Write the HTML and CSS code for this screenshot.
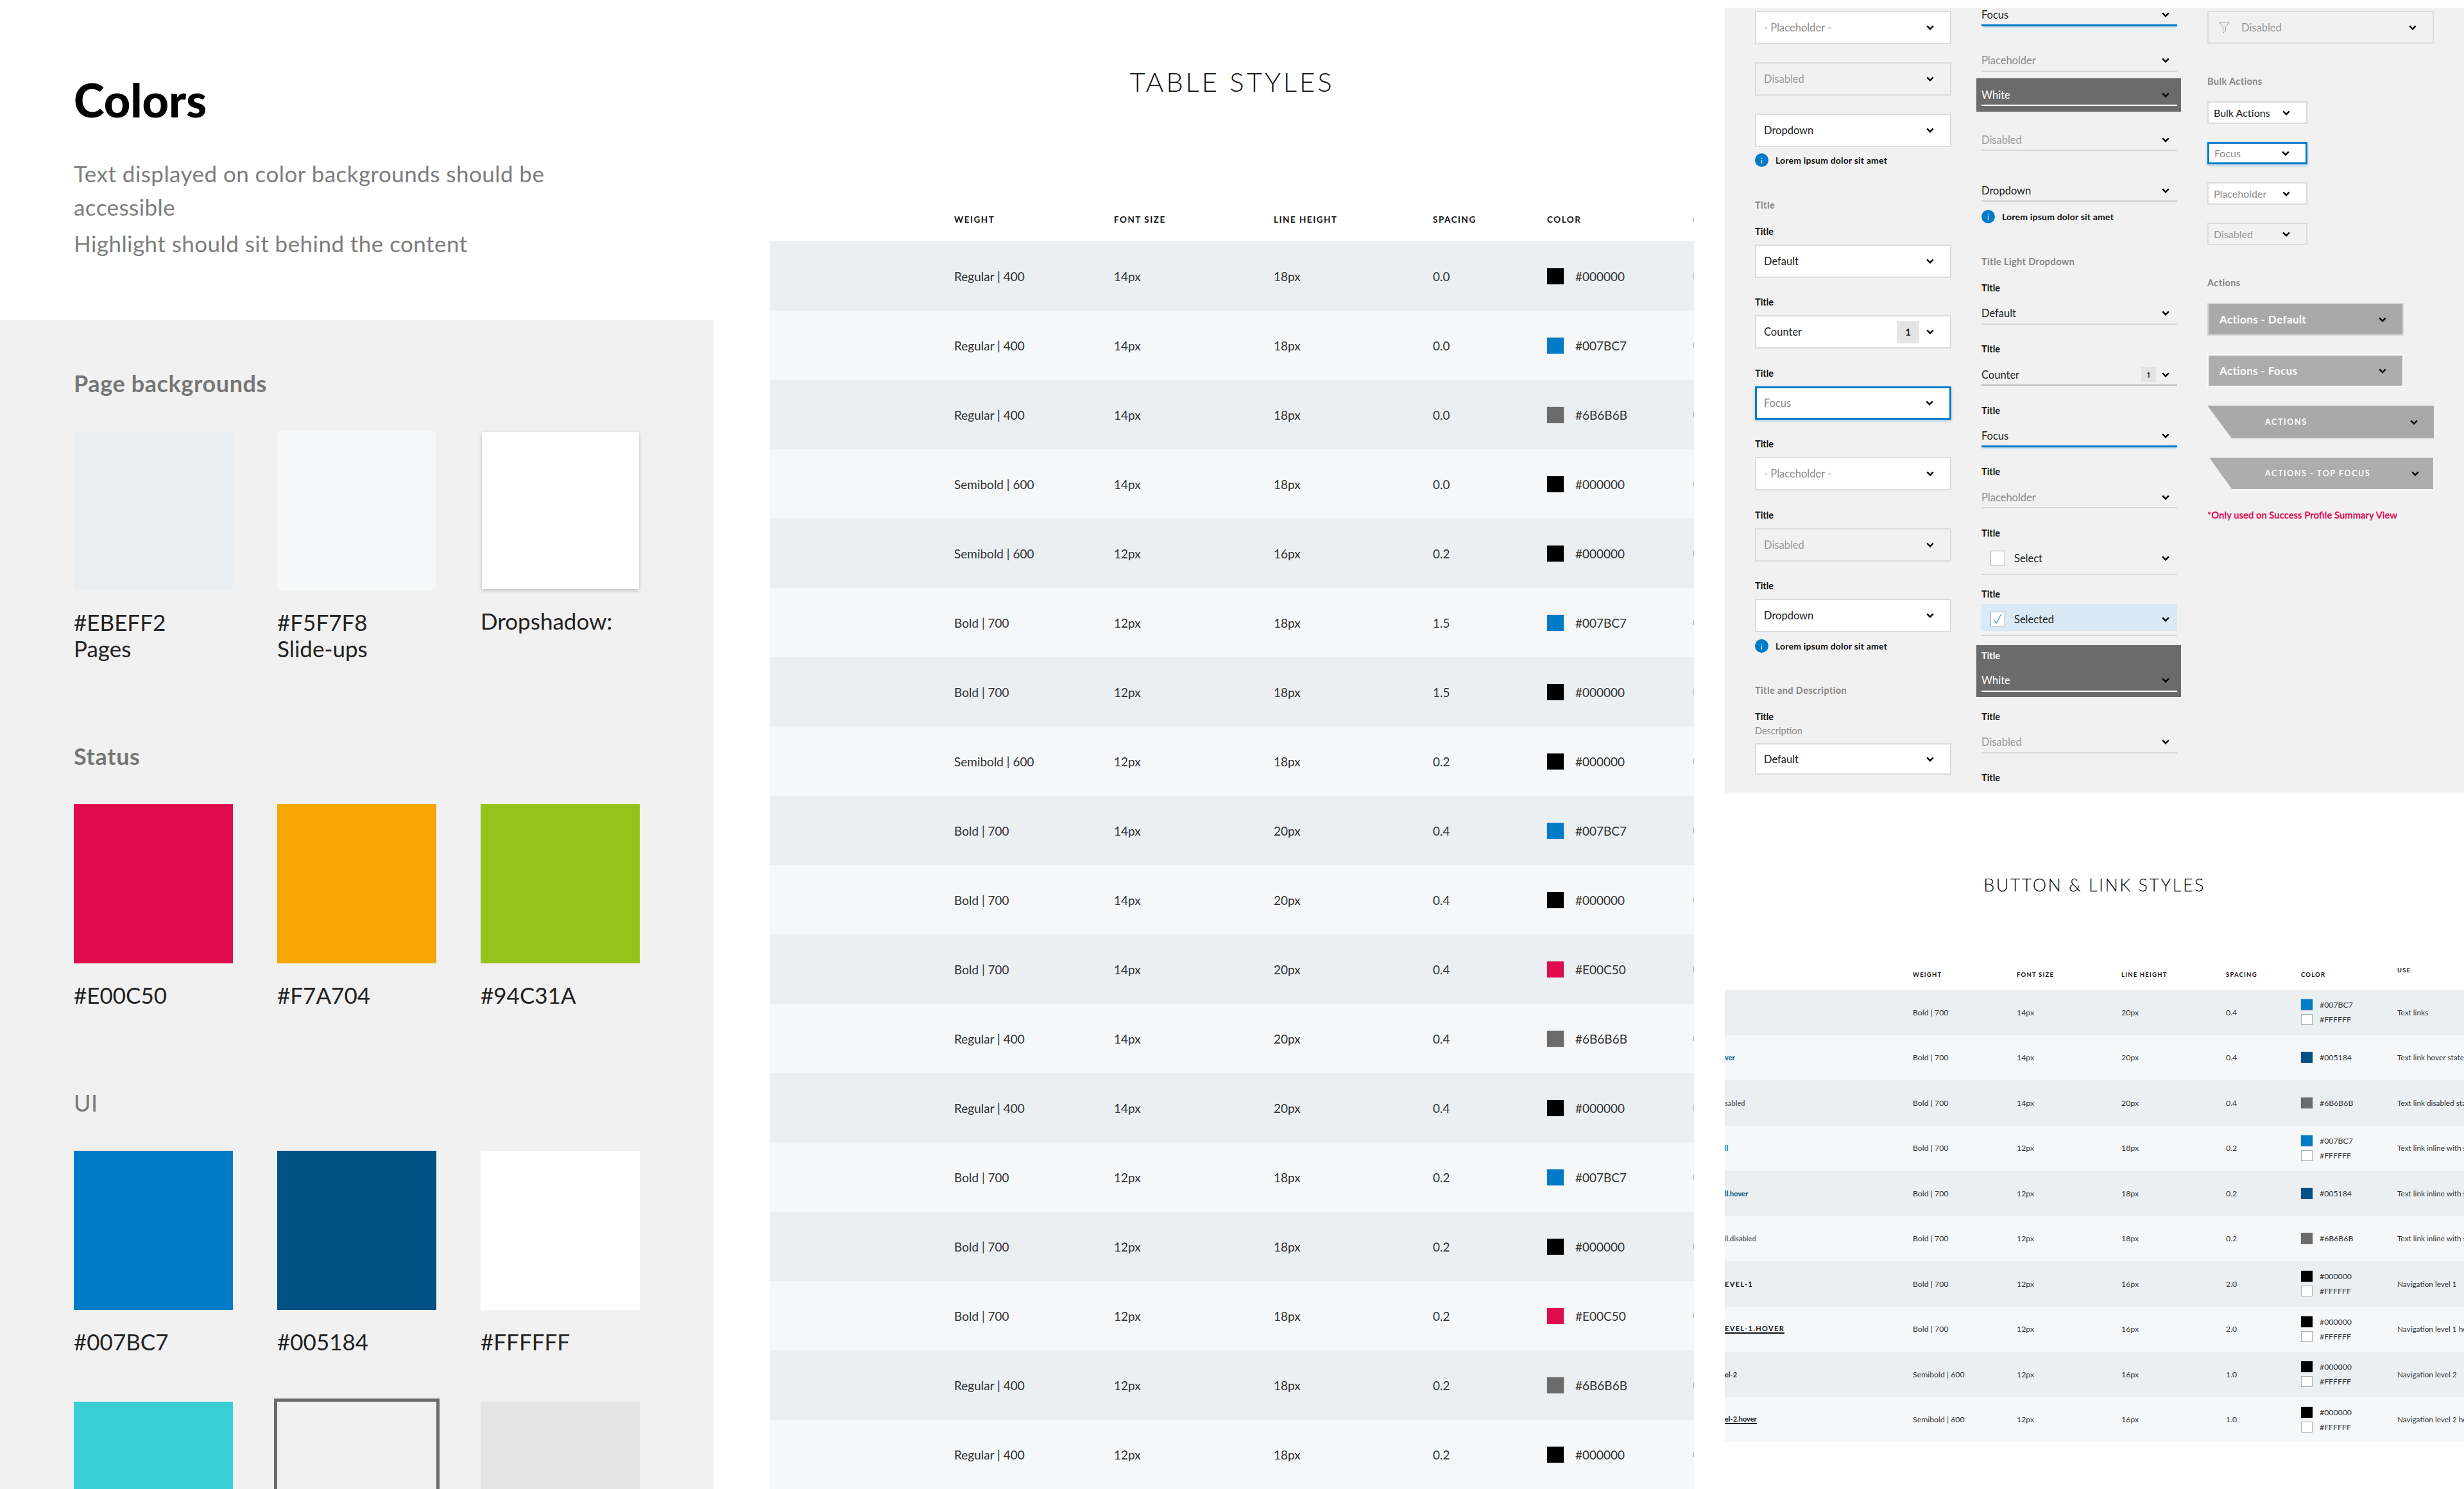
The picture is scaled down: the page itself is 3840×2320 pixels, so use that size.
FILE: index.html
```html
<!DOCTYPE html>
<html lang="en">
<head>
  <meta charset="UTF-8" />
  <title>Style guide</title>
  <link rel="stylesheet" href="styles.css">
</head>
<body>
<svg class="defs">
  <symbol id="chev" viewBox="0 0 12 8"><path d="M1.2 1.4 6 6.2l4.8-4.8" fill="none" stroke="#000" stroke-width="2.4"/></symbol>
</svg>

<div class="page">

  <!-- colors -->
  <section class="colors">
    <div class="intro">
      <h1>Colors</h1>
      <p class="lead">Text displayed on color backgrounds should be accessible</p>
      <p class="lead lead-2">Highlight should sit behind the content</p>
    </div>
    <div class="palette">
      <h2>Page backgrounds</h2>
      <div class="swatches">
        <div class="swatch-item"><div class="swatch pages"></div><p>#EBEFF2<br>Pages</p></div>
        <div class="swatch-item"><div class="swatch slides"></div><p>#F5F7F8<br>Slide-ups</p></div>
        <div class="swatch-item"><div class="swatch shadow"></div><p>Dropshadow:</p></div>
      </div>
      <h2 class="status-head">Status</h2>
      <div class="swatches">
        <div class="swatch-item"><div class="swatch red"></div><p>#E00C50</p></div>
        <div class="swatch-item"><div class="swatch orange"></div><p>#F7A704</p></div>
        <div class="swatch-item"><div class="swatch green"></div><p>#94C31A</p></div>
      </div>
      <h2 class="ui-head">UI</h2>
      <div class="swatches">
        <div class="swatch-item"><div class="swatch blue"></div><p>#007BC7</p></div>
        <div class="swatch-item"><div class="swatch navy"></div><p>#005184</p></div>
        <div class="swatch-item"><div class="swatch white"></div><p>#FFFFFF</p></div>
      </div>
      <div class="swatches last-row">
        <div class="swatch-item"><div class="swatch cyan"></div></div>
        <div class="swatch-item"><div class="swatch outlined"></div></div>
        <div class="swatch-item"><div class="swatch light"></div></div>
      </div>
    </div>
  </section>

  <!-- table styles -->
  <section class="table-styles">
    <div class="big-title">TABLE STYLES</div>
    <div class="t1-row t1-head"><div>WEIGHT</div><div>FONT SIZE</div><div>LINE HEIGHT</div><div>SPACING</div><div>COLOR</div><div class="sliver"></div></div>
    <div class="t1-row"><div>Regular | 400</div><div>14px</div><div>18px</div><div>0.0</div><div class="chip"><i class="c-black"></i>#000000</div><div class="sliver"></div></div>
    <div class="t1-row"><div>Regular | 400</div><div>14px</div><div>18px</div><div>0.0</div><div class="chip"><i class="c-blue"></i>#007BC7</div><div class="sliver"></div></div>
    <div class="t1-row"><div>Regular | 400</div><div>14px</div><div>18px</div><div>0.0</div><div class="chip"><i class="c-grey"></i>#6B6B6B</div><div class="sliver"></div></div>
    <div class="t1-row"><div>Semibold | 600</div><div>14px</div><div>18px</div><div>0.0</div><div class="chip"><i class="c-black"></i>#000000</div><div class="sliver"></div></div>
    <div class="t1-row"><div>Semibold | 600</div><div>12px</div><div>16px</div><div>0.2</div><div class="chip"><i class="c-black"></i>#000000</div><div class="sliver"></div></div>
    <div class="t1-row"><div>Bold | 700</div><div>12px</div><div>18px</div><div>1.5</div><div class="chip"><i class="c-blue"></i>#007BC7</div><div class="sliver"></div></div>
    <div class="t1-row"><div>Bold | 700</div><div>12px</div><div>18px</div><div>1.5</div><div class="chip"><i class="c-black"></i>#000000</div><div class="sliver"></div></div>
    <div class="t1-row"><div>Semibold | 600</div><div>12px</div><div>18px</div><div>0.2</div><div class="chip"><i class="c-black"></i>#000000</div><div class="sliver"></div></div>
    <div class="t1-row"><div>Bold | 700</div><div>14px</div><div>20px</div><div>0.4</div><div class="chip"><i class="c-blue"></i>#007BC7</div><div class="sliver"></div></div>
    <div class="t1-row"><div>Bold | 700</div><div>14px</div><div>20px</div><div>0.4</div><div class="chip"><i class="c-black"></i>#000000</div><div class="sliver"></div></div>
    <div class="t1-row"><div>Bold | 700</div><div>14px</div><div>20px</div><div>0.4</div><div class="chip"><i class="c-red"></i>#E00C50</div><div class="sliver"></div></div>
    <div class="t1-row"><div>Regular | 400</div><div>14px</div><div>20px</div><div>0.4</div><div class="chip"><i class="c-grey"></i>#6B6B6B</div><div class="sliver"></div></div>
    <div class="t1-row"><div>Regular | 400</div><div>14px</div><div>20px</div><div>0.4</div><div class="chip"><i class="c-black"></i>#000000</div><div class="sliver"></div></div>
    <div class="t1-row"><div>Bold | 700</div><div>12px</div><div>18px</div><div>0.2</div><div class="chip"><i class="c-blue"></i>#007BC7</div><div class="sliver"></div></div>
    <div class="t1-row"><div>Bold | 700</div><div>12px</div><div>18px</div><div>0.2</div><div class="chip"><i class="c-black"></i>#000000</div><div class="sliver"></div></div>
    <div class="t1-row"><div>Bold | 700</div><div>12px</div><div>18px</div><div>0.2</div><div class="chip"><i class="c-red"></i>#E00C50</div><div class="sliver"></div></div>
    <div class="t1-row"><div>Regular | 400</div><div>12px</div><div>18px</div><div>0.2</div><div class="chip"><i class="c-grey"></i>#6B6B6B</div><div class="sliver"></div></div>
    <div class="t1-row"><div>Regular | 400</div><div>12px</div><div>18px</div><div>0.2</div><div class="chip"><i class="c-black"></i>#000000</div><div class="sliver"></div></div>
  </section>

  <section class="right">
    <!-- dropdowns -->
    <div class="dropdowns">
      <div class="col col-1">
        <div class="box placeholder"><span>- Placeholder -</span><svg class="chev"><use href="#chev"/></svg></div>
        <div class="box disabled"><span>Disabled</span><svg class="chev"><use href="#chev"/></svg></div>
        <div class="box"><span>Dropdown</span><svg class="chev"><use href="#chev"/></svg></div>
        <div class="info"><b>i</b>Lorem ipsum dolor sit amet</div>

        <div class="section-label">Title</div>
        <div class="field"><label>Title</label><div class="box"><span>Default</span><svg class="chev"><use href="#chev"/></svg></div></div>
        <div class="field"><label>Title</label><div class="box"><span>Counter</span><em class="count">1</em><svg class="chev"><use href="#chev"/></svg></div></div>
        <div class="field"><label>Title</label><div class="box focus placeholder"><span>Focus</span><svg class="chev"><use href="#chev"/></svg></div></div>
        <div class="field"><label>Title</label><div class="box placeholder"><span>- Placeholder -</span><svg class="chev"><use href="#chev"/></svg></div></div>
        <div class="field"><label>Title</label><div class="box disabled"><span>Disabled</span><svg class="chev"><use href="#chev"/></svg></div></div>
        <div class="field"><label>Title</label><div class="box"><span>Dropdown</span><svg class="chev"><use href="#chev"/></svg></div></div>
        <div class="info"><b>i</b>Lorem ipsum dolor sit amet</div>

        <div class="section-label">Title and Description</div>
        <div class="field"><label class="tight">Title</label><div class="desc">Description</div><div class="box short"><span>Default</span><svg class="chev"><use href="#chev"/></svg></div></div>
      </div>

      <div class="col col-2">
        <div class="line focus-line first"><span>Focus</span><svg class="chev"><use href="#chev"/></svg></div>
        <div class="line placeholder"><span>Placeholder</span><svg class="chev"><use href="#chev"/></svg></div>
        <div class="dark top-dark"><div class="line white-line"><span>White</span><svg class="chev"><use href="#chev"/></svg></div></div>
        <div class="line disabled after-dark"><span>Disabled</span><svg class="chev"><use href="#chev"/></svg></div>
        <div class="line thick"><span>Dropdown</span><svg class="chev"><use href="#chev"/></svg></div>
        <div class="info"><b>i</b>Lorem ipsum dolor sit amet</div>

        <div class="section-label">Title Light Dropdown</div>
        <div class="field"><label>Title</label><div class="line"><span>Default</span><svg class="chev"><use href="#chev"/></svg></div></div>
        <div class="field"><label>Title</label><div class="line darker"><span>Counter</span><em class="count small">1</em><svg class="chev"><use href="#chev"/></svg></div></div>
        <div class="field"><label>Title</label><div class="line focus-line"><span>Focus</span><svg class="chev"><use href="#chev"/></svg></div></div>
        <div class="field"><label>Title</label><div class="line placeholder"><span>Placeholder</span><svg class="chev"><use href="#chev"/></svg></div></div>
        <div class="field check-field"><label>Title</label><div class="check-wrap"><div class="check-row"><i class="tick"></i><span>Select</span><svg class="chev"><use href="#chev"/></svg></div></div></div>
        <div class="field check-field"><label>Title</label><div class="check-wrap"><div class="check-row selected"><i class="tick"><svg viewBox="0 0 23 23"><path d="M5 13.5 9 18.5 17 3.5" fill="none" stroke="#1f8fd8" stroke-width="1.2"/></svg></i><span>Selected</span><svg class="chev"><use href="#chev"/></svg></div></div></div>
        <div class="dark field-dark"><label>Title</label><div class="line white-line"><span>White</span><svg class="chev"><use href="#chev"/></svg></div></div>
        <div class="field"><label>Title</label><div class="line disabled"><span>Disabled</span><svg class="chev"><use href="#chev"/></svg></div></div>
        <div class="field"><label>Title</label></div>
      </div>

      <div class="col col-3">
        <div class="box disabled filter"><svg class="funnel" viewBox="0 0 17 18"><path d="M.7.7h15.6L10.4 8v6.4l-3.8 3V8z" fill="none" stroke="#9a9a9a" stroke-width="1"/></svg><span>Disabled</span><svg class="chev"><use href="#chev"/></svg></div>

        <div class="section-label s3">Bulk Actions</div>
        <div class="box small"><span>Bulk Actions</span><svg class="chev"><use href="#chev"/></svg></div>
        <div class="box small focus placeholder"><span>Focus</span><svg class="chev"><use href="#chev"/></svg></div>
        <div class="box small placeholder"><span>Placeholder</span><svg class="chev"><use href="#chev"/></svg></div>
        <div class="box small disabled"><span>Disabled</span><svg class="chev"><use href="#chev"/></svg></div>

        <div class="section-label s3">Actions</div>
        <div class="action"><span>Actions - Default</span><svg class="chev"><use href="#chev"/></svg></div>
        <div class="action action-focus"><span>Actions - Focus</span><svg class="chev"><use href="#chev"/></svg></div>
        <div class="tag"><span>ACTIONS</span><svg class="chev"><use href="#chev"/></svg></div>
        <div class="tag-glow"><div class="tag tag-focus"><span>ACTIONS - TOP FOCUS</span><svg class="chev"><use href="#chev"/></svg></div></div>
        <div class="note">*Only used on Success Profile Summary View</div>
      </div>
    </div>

    <!-- button & link styles -->
    <div class="big-title small-title">BUTTON &amp; LINK STYLES</div>
    <div class="t2-row t2-head"><div></div><div>WEIGHT</div><div>FONT SIZE</div><div>LINE HEIGHT</div><div>SPACING</div><div>COLOR</div><div class="use-head">USE</div></div>
    <div class="t2-row"><div></div><div>Bold | 700</div><div>14px</div><div>20px</div><div>0.4</div><div class="chips"><span><i class="c-blue"></i>#007BC7</span><span><i class="c-white"></i>#FFFFFF</span></div><div class="use">Text links</div></div>
    <div class="t2-row"><div class="nm n-navy">ver</div><div>Bold | 700</div><div>14px</div><div>20px</div><div>0.4</div><div class="chips"><span><i class="c-navy"></i>#005184</span></div><div class="use">Text link hover state</div></div>
    <div class="t2-row"><div class="nm n-grey">sabled</div><div>Bold | 700</div><div>14px</div><div>20px</div><div>0.4</div><div class="chips"><span><i class="c-grey"></i>#6B6B6B</span></div><div class="use">Text link disabled state</div></div>
    <div class="t2-row"><div class="nm n-blue">ll</div><div>Bold | 700</div><div>12px</div><div>18px</div><div>0.2</div><div class="chips"><span><i class="c-blue"></i>#007BC7</span><span><i class="c-white"></i>#FFFFFF</span></div><div class="use">Text link inline with small text</div></div>
    <div class="t2-row"><div class="nm n-navy">ll.hover</div><div>Bold | 700</div><div>12px</div><div>18px</div><div>0.2</div><div class="chips"><span><i class="c-navy"></i>#005184</span></div><div class="use">Text link inline with small text</div></div>
    <div class="t2-row"><div class="nm n-grey">ll.disabled</div><div>Bold | 700</div><div>12px</div><div>18px</div><div>0.2</div><div class="chips"><span><i class="c-grey"></i>#6B6B6B</span></div><div class="use">Text link inline with small text</div></div>
    <div class="t2-row"><div class="nm caps">EVEL-1</div><div>Bold | 700</div><div>12px</div><div>16px</div><div>2.0</div><div class="chips"><span><i class="c-black"></i>#000000</span><span><i class="c-white"></i>#FFFFFF</span></div><div class="use">Navigation level 1</div></div>
    <div class="t2-row"><div class="nm caps under">EVEL-1.HOVER</div><div>Bold | 700</div><div>12px</div><div>16px</div><div>2.0</div><div class="chips"><span><i class="c-black"></i>#000000</span><span><i class="c-white"></i>#FFFFFF</span></div><div class="use">Navigation level 1 hover</div></div>
    <div class="t2-row"><div class="nm">el-2</div><div>Semibold | 600</div><div>12px</div><div>16px</div><div>1.0</div><div class="chips"><span><i class="c-black"></i>#000000</span><span><i class="c-white"></i>#FFFFFF</span></div><div class="use">Navigation level 2</div></div>
    <div class="t2-row"><div class="nm under">el-2.hover</div><div>Semibold | 600</div><div>12px</div><div>16px</div><div>1.0</div><div class="chips"><span><i class="c-black"></i>#000000</span><span><i class="c-white"></i>#FFFFFF</span></div><div class="use">Navigation level 2 hover</div></div>
  </section>
</div>
</body>
</html>
```
FILE: styles.css
```css
:root {
  --grey-panel: #f1f1f1;
  --row-dark: #ebeff2;
  --row-light: #f5f7f8;
  --blue: #007bc7;
  --border: #dcdcdc;
}

* { box-sizing: border-box; }

body {
  margin: 0;
  background: #fff;
  color: #222;
  font-family: "Lato", "Liberation Sans", sans-serif;
}

.defs { display: none; }

.page {
  display: flex;
  width: 3840px;
  height: 2320px;
  overflow: hidden;
}

/* colors */
.colors {
  width: 1112px;
  margin-right: 88px;
  flex: none;
}

.intro {
  height: 499px;
  padding: 113px 0 0 115px;
}

.intro h1 {
  margin: 0 0 47px;
  font-size: 72px;
  line-height: 84px;
  font-weight: 900;
  color: #000;
}

.lead {
  width: 800px;
  margin: 0;
  font-size: 35px;
  line-height: 52px;
  letter-spacing: 0.45px;
  color: #7d7d7d;
}

.lead-2 { margin-top: 5px; }

.palette {
  height: 1821px;
  padding: 78px 0 0 115px;
  background: var(--grey-panel);
}

.palette h2 {
  margin: 0 0 55px;
  font-size: 36px;
  line-height: 40px;
  font-weight: 700;
  letter-spacing: 0.6px;
  color: #767676;
}

.status-head { margin-top: 127px !important; }
.ui-head { margin-top: 127px !important; font-weight: 400 !important; }

.swatches {
  display: flex;
  gap: 69px;
}

.last-row { margin-top: 73px; }

.swatch-item { width: 248px; }

.swatch { height: 248px; }

.swatch-item p {
  margin: 29px 0 0;
  font-size: 35px;
  line-height: 41px;
  color: #222;
}

.pages { background: #ebeff2; }
.slides { background: #f5f7f8; }
.shadow { background: #fff; margin: 1px 2px; height: 245px; width: 245px; box-shadow: 0 2px 6px rgba(0,0,0,0.2); }
.red { background: #e00c50; }
.orange { background: #f7a704; }
.green { background: #94c31a; }
.blue { background: #007bc7; }
.navy { background: #005184; }
.white { background: #fff; }
.cyan { background: #3acfd5; }
.outlined { outline: 5px solid #6b6b6b; margin-top: 0; }
.light { background: #e4e4e4; }

/* tables */
.table-styles {
  width: 1440px;
  flex: none;
  margin-right: 48px;
}

.big-title {
  height: 255px;
  line-height: 255px;
  text-align: center;
  font-size: 42px;
  font-weight: 300;
  letter-spacing: 3.9px;
  color: #111;
}

.t1-row {
  display: grid;
  grid-template-columns: 249px 249px 248px 178px 228px 1fr;
  align-items: center;
  height: 108px;
  padding-left: 287px;
  font-size: 19px;
  color: #333;
  white-space: nowrap;
  overflow: hidden;
}

.t1-row:nth-child(odd) { background: var(--row-dark); }
.t1-row:nth-child(even) { background: var(--row-light); }

.t1-head,
.t1-head:nth-child(even) {
  height: 121px;
  padding-top: 77px;
  align-items: start;
  background: #fff;
  font-size: 13.5px;
  line-height: 20px;
  font-weight: 700;
  letter-spacing: 1.5px;
  color: #111;
}

.sliver {
  justify-self: start;
  width: 1px;
  height: 8px;
  background: #bbb;
}

.t1-head .sliver { margin-top: 6px; }

.chip {
  display: flex;
  align-items: center;
  gap: 18px;
}

.chip i {
  width: 26px;
  height: 25px;
  box-shadow: 0 0 1px #888;
}

.c-black { background: #000; }
.c-blue { background: #007bc7; }
.c-grey { background: #6b6b6b; }
.c-red { background: #e00c50; }
.c-navy { background: #005184; }
.c-white { background: #fff; }

/* right column */
.right {
  width: 1152px;
  flex: none;
}

.dropdowns {
  display: flex;
  gap: 47px;
  height: 1223px;
  margin-top: 12px;
  padding-left: 47px;
  background: var(--grey-panel);
  overflow: hidden;
}

.col-1 { width: 306px; padding-top: 5px; }
.col-2 { width: 305px; }
.col-3 { width: 353px; padding-top: 5px; }

.col { flex: none; }

.chev {
  width: 12px;
  height: 8px;
  flex: none;
}

.box {
  display: flex;
  align-items: center;
  height: 52px;
  margin-bottom: 28px;
  padding: 0 25px 0 12px;
  border: 2px solid var(--border);
  background: #fff;
  font-size: 16.5px;
  color: #222;
}

.field .box { margin-bottom: 28.5px; }

.box span,
.line span { flex: 1; }

.box.placeholder { color: #8c8c8c; }
.box.disabled { background: var(--grey-panel); color: #999; }
.box.focus { border: 3px solid var(--blue); box-shadow: 0 2px 4px rgba(0,123,199,0.3); padding-left: 11px; }
.box.short { height: 49px; }

.count {
  width: 35px;
  height: 35px;
  margin-right: 11px;
  background: #e4e4e4;
  text-align: center;
  line-height: 35px;
  font-style: normal;
  font-weight: 700;
  font-size: 15px;
}

.count.small {
  width: 23px;
  height: 23px;
  margin-right: 9px;
  line-height: 23px;
  font-size: 11px;
}

.info {
  display: flex;
  align-items: center;
  gap: 11px;
  height: 20px;
  margin-top: -17.5px;
  font-size: 14px;
  font-weight: 700;
  letter-spacing: 0.2px;
  color: #111;
}

.info b {
  width: 21px;
  height: 21px;
  border-radius: 50%;
  background: var(--blue);
  color: #fff;
  text-align: center;
  font-size: 11px;
  line-height: 23px;
  font-weight: 400;
}

.section-label {
  height: 20px;
  margin: 50px 0 21px;
  font-size: 14.5px;
  line-height: 20px;
  font-weight: 700;
  letter-spacing: 0.4px;
  color: #858585;
}

.field label {
  display: block;
  height: 20px;
  margin-bottom: 10px;
  font-size: 14.5px;
  line-height: 20px;
  font-weight: 700;
  color: #111;
}

.field .tight { margin-bottom: 2px; }

.desc {
  height: 20px;
  margin-bottom: 9px;
  font-size: 14.5px;
  line-height: 20px;
  color: #8c8c8c;
}

/* underlined dropdowns */
.line {
  display: flex;
  align-items: center;
  height: 33px;
  padding-right: 12px;
  border-bottom: 2px solid #d8d8d8;
  font-size: 16.5px;
  color: #222;
}

.line.first { margin-top: -4.5px; }
.line.placeholder { margin-top: 38px; color: #8c8c8c; }
.field .line.placeholder { margin-top: 0; }
.line.disabled { color: #999; }
.line.darker { border-bottom-color: #bbb; }
.line.thick { margin-top: 47px; border-bottom: 3px solid #d8d8d8; }
.line.after-dark { margin-top: 28.5px; }
.focus-line { border-bottom: 3px solid var(--blue); box-shadow: 0 3px 3px -2px rgba(0,123,199,0.4); }
.line + .info, .thick + .info { margin-top: 12.5px; }

.col-2 .field label { margin-bottom: 14px; }
.col-2 .field { margin-bottom: 28.5px; }

.dark {
  margin: 0 -6px 0 -8px;
  background: #6b6b6b;
}

.top-dark {
  margin-top: 10.5px;
  padding: 10px 6px 8.5px 8px;
}

.field-dark {
  margin-bottom: 21px;
  padding: 7px 6px 8px 8px;
}

.field-dark label {
  display: block;
  height: 20px;
  margin-bottom: 13px;
  font-size: 14.5px;
  line-height: 20px;
  font-weight: 700;
  color: #fff;
}

.white-line {
  border-bottom-color: #fff;
  color: #fff;
}

.col-2 .check-field { margin-bottom: 20px; }
.col-2 .check-field label { margin-bottom: 5px; }
.col-2 .check-field + .check-field { margin-bottom: 14px; }

.check-wrap { border-bottom: 2px solid #d8d8d8; padding-bottom: 6px; }

.check-row {
  display: flex;
  align-items: center;
  height: 42px;
  padding: 6px 12px 0 14px;
  font-size: 16.5px;
  color: #222;
}

.check-row span { flex: 1; }

.check-row.selected { background: #d9e9f5; }

.tick {
  width: 23px;
  height: 23px;
  margin-right: 14px;
  border: 1px solid #aaa;
  background: #fff;
  flex: none;
}

.tick svg {
  display: block;
  width: 100%;
  height: 100%;
}

/* third column */
.filter {
  height: 51px;
  padding-left: 16px;
  margin-bottom: 0;
}

.funnel {
  width: 17px;
  height: 18px;
  margin-right: 18px;
  flex: none;
}

.s3 { margin: 49px 0 21px; font-size: 14.5px; }

.box.small {
  width: 156px;
  height: 35px;
  padding-left: 8px;
  font-size: 16px;
}

.box.small.disabled { margin-bottom: 0; }

.action {
  display: flex;
  align-items: center;
  width: 306px;
  height: 51px;
  margin-bottom: 29px;
  padding: 0 25px 0 17px;
  border: 2px solid #d6d6d6;
  background: #a9a9a9;
  color: #fff;
  font-size: 17px;
  font-weight: 700;
  letter-spacing: 0.4px;
}

.action span,
.tag span { flex: 1; }

.action-focus {
  border-color: #fbfbfb;
  background: #adadad;
}

.tag {
  display: flex;
  align-items: center;
  width: 353px;
  height: 51px;
  margin-bottom: 30px;
  padding: 0 25px 0 90px;
  background: #a9a9a9;
  clip-path: polygon(0 0, 100% 0, 100% 100%, 38px 100%);
  color: #fff;
  font-size: 12.5px;
  font-weight: 700;
  letter-spacing: 1.6px;
}

.tag-glow {
  filter: drop-shadow(0 0 1px #fff);
  width: 349px;
  margin-left: 3px;
}

.tag-focus {
  width: 349px;
  height: 49px;
  padding-left: 87px;
  padding-right: 22px;
  background: #adadad;
  clip-path: polygon(0 0, 100% 0, 100% 100%, 35px 100%);
}

.note {
  height: 20px;
  font-size: 14.8px;
  line-height: 20px;
  font-weight: 700;
  color: #e00c50;
}

.small-title {
  height: 60px;
  margin-top: 114px;
  line-height: 60px;
  font-size: 27px;
  letter-spacing: 2.4px;
  font-weight: 300;
  color: #000;
}

.t2-row {
  display: grid;
  grid-template-columns: 293px 162px 163px 163px 117px 150px 1fr;
  align-items: center;
  height: 70.5px;
  font-size: 12.3px;
  color: #333;
  white-space: nowrap;
  overflow: hidden;
}

.t2-row:nth-child(odd) { background: var(--row-light); }
.t2-row:nth-child(even) { background: var(--row-dark); }

.t2-head,
.t2-head:nth-child(even),
.t2-head:nth-child(odd) {
  height: 133px;
  padding-top: 100px;
  align-items: start;
  background: #fff;
  font-size: 9.5px;
  line-height: 20px;
  font-weight: 700;
  letter-spacing: 1.2px;
  color: #111;
}

.use { font-size: 11.8px; }

.use-head { margin-top: -7px; }

.chips {
  display: flex;
  flex-direction: column;
  gap: 6px;
}

.chips span {
  display: flex;
  align-items: center;
  gap: 11px;
  height: 17px;
}

.chips i {
  width: 18px;
  height: 17px;
  box-shadow: 0 0 1px #777;
}

.chips i.c-white { box-shadow: inset 0 0 0 1px #aaa; }

.nm {
  font-size: 11px;
  font-weight: 700;
  color: #222;
}

.n-navy { color: #005184; }
.n-grey { color: #6b6b6b; }
.n-blue { color: #007bc7; }
.caps { letter-spacing: 1.4px; color: #111; }

.nm.under {
  justify-self: start;
  border-bottom: 2px solid #111;
  line-height: 13px;
}
```
